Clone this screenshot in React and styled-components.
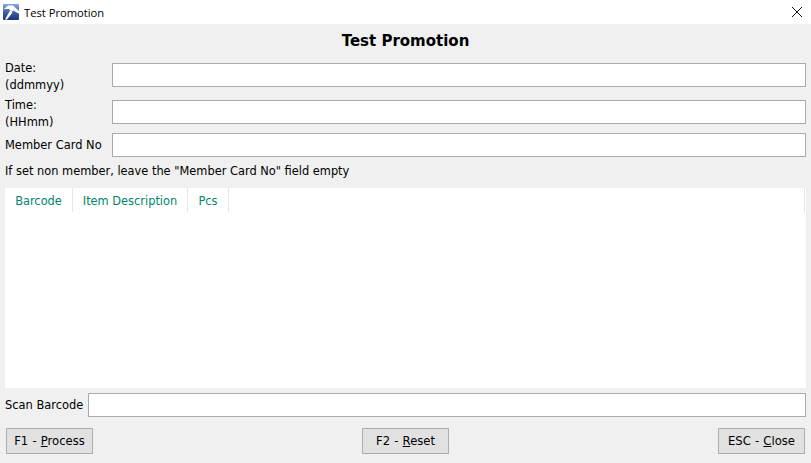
import React from "react";
import styled, { createGlobalStyle } from "styled-components";

const Global = createGlobalStyle`
  html, body { margin: 0; padding: 0; background: #f0f0f0; }
  body { font-family: "DejaVu Sans", sans-serif; font-size: 12px; color: #000; }
`;

const Window = styled.div`
  width: 811px;
  height: 463px;
  display: flex;
  flex-direction: column;
  overflow: hidden;
  background: #f0f0f0;
`;

const TitleBar = styled.div`
  height: 24px;
  flex: none;
  background: #fff;
  display: flex;
  align-items: center;
  padding: 0 8px 0 2px;
`;

const TitleText = styled.span`
  font-family: "Open Sans", sans-serif;
  font-size: 11.2px;
  margin-left: 4px;
  flex: 1;
`;

const Body = styled.div`
  flex: 1;
  display: flex;
  flex-direction: column;
  padding: 0 5px 0 5px;
`;

const Heading = styled.h1`
  margin: 0;
  height: 39px;
  line-height: 34px;
  text-align: center;
  font-size: 15px;
  font-weight: 700;
`;

const FieldRow = styled.div`
  display: flex;
  align-items: center;
  height: 24px;
  margin-bottom: ${(p) => p.$gap}px;
`;

const Label = styled.label`
  width: 107px;
  flex: none;
  box-sizing: border-box;
  font-size: 11.45px;
  line-height: 16.5px;
  white-space: nowrap;
  padding-top: ${(p) => (p.$multi ? 3 : 1)}px;
`;

const Input = styled.input`
  flex: 1;
  min-width: 0;
  height: 24px;
  box-sizing: border-box;
  border: 1px solid #ababab;
  background: #fff;
  outline: none;
`;

const Note = styled.div`
  font-size: 11.4px;
  height: 31px;
  line-height: 28px;
`;

const Table = styled.div`
  height: 200px;
  background: #fff;
  flex: none;
`;

const HeaderRow = styled.div`
  display: flex;
  height: 24px;
`;

const HeaderCell = styled.div`
  box-sizing: border-box;
  width: ${(p) => p.$w}px;
  height: 24px;
  line-height: 26px;
  text-align: center;
  font-size: 11.4px;
  color: #00856a;
  border-right: 1px solid #e6e6e6;
`;

const HeaderFiller = styled.div`
  flex: 1;
  margin-right: 1px;
  border-right: 1px solid #e6e6e6;
`;

const ScanRow = styled.div`
  display: flex;
  align-items: center;
  height: 24px;
  margin-top: 5px;
`;

const ScanLabel = styled.label`
  width: 83px;
  flex: none;
  font-size: 11.45px;
  white-space: nowrap;
`;

const ButtonBar = styled.div`
  display: flex;
  justify-content: space-between;
  margin-top: 11px;
  padding: 0 1px;
`;

const Button = styled.button`
  box-sizing: border-box;
  width: 87px;
  height: 26px;
  padding: 0;
  border: 1px solid #adadad;
  background: #e1e1e1;
  font-family: inherit;
  font-size: 11.6px;
  word-spacing: 0.5px;
  color: #000;
`;

const Hammer = () => (
  <svg width="18" height="18" viewBox="0 0 18 18">
    <defs>
      <linearGradient id="hg" x1="0" y1="0" x2="0" y2="1">
        <stop offset="0" stopColor="#8aa8dc" />
        <stop offset="0.5" stopColor="#3f63ac" />
        <stop offset="1" stopColor="#1b3478" />
      </linearGradient>
    </defs>
    <rect x="1" y="1" width="16" height="16" rx="1" fill="url(#hg)" />
    <path d="M1.5 6.5 L6 2.5 L11 2.5 L17 8 L17 10.5 L14.5 9.5 L11.5 7.5 L9.5 9 L7 6 L3.5 6 Z" fill="#fff" />
    <path d="M8 7.5 L10.5 9.5 L5 16.5 L3 16.5 Z" fill="#fff" />
  </svg>
);

const CloseIcon = () => (
  <svg width="12" height="12" viewBox="0 0 12 12">
    <path d="M1 1 L11 11 M11 1 L1 11" stroke="#111" strokeWidth="1" fill="none" />
  </svg>
);

export default function App() {
  return (
    <Window>
      <Global />
      <TitleBar>
        <Hammer />
        <TitleText>Test Promotion</TitleText>
        <CloseIcon />
      </TitleBar>
      <Body>
        <Heading>Test Promotion</Heading>
        <FieldRow $gap={13}>
          <Label $multi>Date:<br />(ddmmyy)</Label>
          <Input />
        </FieldRow>
        <FieldRow $gap={9}>
          <Label $multi>Time:<br />(HHmm)</Label>
          <Input />
        </FieldRow>
        <FieldRow $gap={0}>
          <Label>Member Card No</Label>
          <Input />
        </FieldRow>
        <Note>If set non member, leave the "Member Card No" field empty</Note>
        <Table>
          <HeaderRow>
            <HeaderCell $w={68}>Barcode</HeaderCell>
            <HeaderCell $w={115}>Item Description</HeaderCell>
            <HeaderCell $w={41}>Pcs</HeaderCell>
            <HeaderFiller />
          </HeaderRow>
        </Table>
        <ScanRow>
          <ScanLabel>Scan Barcode</ScanLabel>
          <Input />
        </ScanRow>
        <ButtonBar>
          <Button>F1 - <u>P</u>rocess</Button>
          <Button>F2 - <u>R</u>eset</Button>
          <Button>ESC - <u>C</u>lose</Button>
        </ButtonBar>
      </Body>
    </Window>
  );
}
